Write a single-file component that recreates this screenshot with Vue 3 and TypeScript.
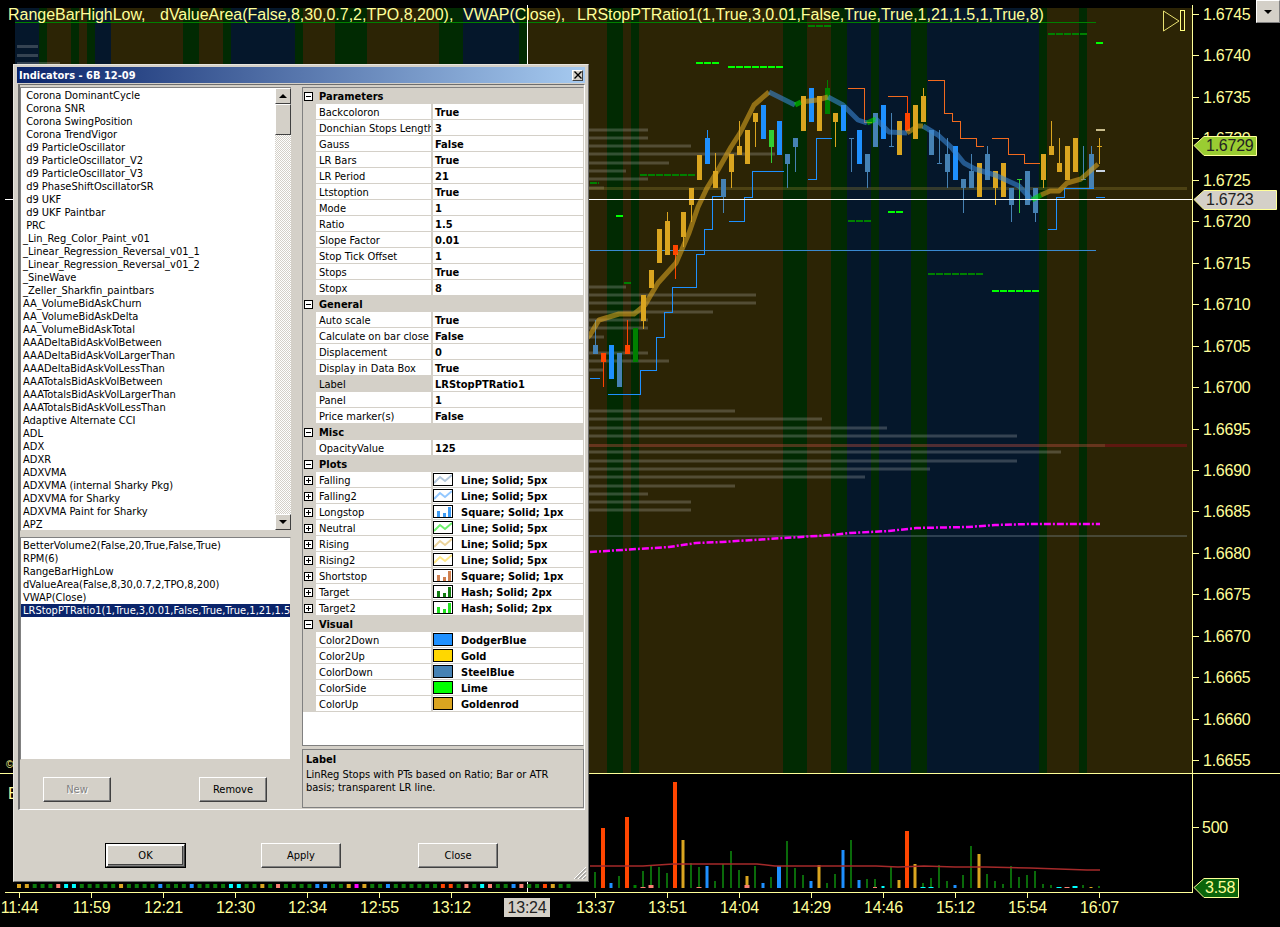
<script setup lang="ts">
type Candle = [number, string, number, number, number, number]
type Row = { name: string; value: string; plus?: boolean; icon?: string; color?: string; bars?: boolean; selected?: boolean }

const G = '#daa520', B = '#1e90ff', S = '#4682b4', R = '#ff4500', L = '#32cd32', D = '#008000'

// x, colour, wick top, wick bottom, body top, body bottom
const candles: Candle[] = [
  [595, S, 320, 354, 345, 354], [603, R, 353, 387, 353, 362], [611, B, 345, 379, 345, 379], [619, S, 353, 387, 353, 387],
  [627, R, 320, 354, 345, 354], [635, D, 328, 362, 328, 362], [643, G, 295, 329, 295, 321], [651, G, 270, 288, 270, 288],
  [659, G, 229, 263, 229, 263], [667, G, 212, 255, 221, 255], [675, R, 245, 279, 245, 255], [683, G, 212, 247, 212, 237],
  [691, G, 188, 222, 188, 205], [699, G, 155, 180, 155, 180], [707, B, 130, 164, 138, 164], [715, G, 153, 188, 171, 188],
  [723, S, 179, 213, 179, 197], [731, G, 154, 188, 154, 172], [739, G, 121, 155, 146, 155], [747, G, 130, 164, 130, 164],
  [755, G, 113, 147, 113, 122], [763, B, 105, 139, 105, 139], [771, L, 130, 163, 130, 147], [779, B, 121, 155, 121, 155],
  [787, S, 154, 188, 154, 164], [795, S, 138, 172, 138, 147], [803, G, 96, 131, 96, 131], [811, B, 88, 122, 88, 122],
  [819, G, 96, 131, 96, 131], [827, D, 80, 114, 88, 114], [835, G, 113, 147, 113, 122], [843, B, 105, 131, 105, 131],
  [851, S, 138, 172, 138, 139], [859, B, 130, 164, 130, 164], [867, S, 154, 188, 154, 172], [875, S, 113, 147, 113, 147],
  [883, B, 105, 139, 105, 139], [891, S, 113, 147, 146, 147], [899, G, 121, 155, 121, 155], [907, R, 96, 131, 113, 131],
  [915, G, 105, 139, 105, 139], [923, G, 88, 122, 96, 122], [931, S, 130, 155, 130, 155], [939, S, 130, 164, 163, 164],
  [947, S, 138, 188, 154, 172], [955, B, 146, 180, 146, 180], [963, S, 179, 213, 179, 188], [971, S, 154, 188, 171, 188],
  [979, G, 163, 197, 163, 197], [987, S, 146, 180, 154, 180], [995, G, 171, 205, 171, 188], [1003, G, 163, 197, 163, 197],
  [1011, S, 188, 222, 188, 205], [1019, L, 179, 213, 179, 180], [1027, S, 171, 205, 171, 205], [1035, S, 188, 222, 188, 213],
  [1043, G, 154, 188, 154, 180], [1051, G, 121, 155, 146, 155], [1059, G, 138, 172, 163, 172], [1067, G, 146, 180, 146, 180],
  [1075, G, 138, 172, 138, 172], [1083, S, 146, 180, 179, 180], [1091, S, 146, 188, 154, 188], [1099, G, 138, 164, 146, 147],
]

// background bands: start, end, kind
const bands: [number, number, string][] = [
  [15, 39, 'b'], [39, 47, 'g'], [47, 71, 'o'], [71, 79, 'g'], [79, 87, 'o'], [87, 95, 'g'], [95, 111, 'b'], [111, 183, 'o'],
  [183, 199, 'g'], [199, 223, 'o'], [223, 231, 'g'], [231, 295, 'b'], [295, 303, 'g'], [303, 335, 'o'], [335, 367, 'g'],
  [367, 439, 'o'], [439, 463, 'g'], [463, 519, 'b'], [519, 527, 'g'], [527, 607, 'o'], [607, 623, 'g'], [623, 631, 'o'],
  [631, 639, 'g'], [639, 783, 'o'], [783, 807, 'g'], [807, 831, 'o'], [831, 847, 'g'], [847, 871, 'b'], [871, 879, 'g'],
  [879, 911, 'b'], [911, 927, 'g'], [927, 1039, 'b'], [1039, 1047, 'g'], [1047, 1079, 'o'], [1079, 1087, 'g'], [1087, 1192, 'o'],
]
const bandFill: Record<string, string> = { o: '#2c2405', g: '#012a02', b: '#05172b' }

// value area rows: y, right end
const profile: [number, number][] = [
  [130, 648], [138, 648], [146, 691], [154, 775], [163, 669], [171, 626], [179, 648], [188, 604], [287, 626], [295, 756], [303, 756],
  [312, 713], [320, 648], [328, 648], [337, 604], [353, 648], [361, 669], [370, 604], [411, 735], [419, 822], [428, 887], [436, 1017],
  [452, 1061], [461, 1017], [469, 930], [477, 865], [486, 735], [494, 648], [502, 691], [510, 691],
]

const legend = [
  { x: 8, text: 'RangeBarHighLow,' },
  { x: 160, text: 'dValueArea(False,8,30,0.7,2,TPO,8,200),' },
  { x: 463, text: 'VWAP(Close),' },
  { x: 577, text: 'LRStopPTRatio1(1,True,3,0.01,False,True,True,1,21,1.5,1,True,8)' },
]

const priceLabels = ['1.6745', '1.6740', '1.6735', '1.6730', '1.6725', '1.6720', '1.6715', '1.6710', '1.6705', '1.6700', '1.6695', '1.6690',
  '1.6685', '1.6680', '1.6675', '1.6670', '1.6665', '1.6660', '1.6655'].map((text, i) => ({ text, y: 14 + i * 41.45 }))

const times = ['11:44', '11:59', '12:21', '12:30', '12:34', '12:55', '13:12', '13:24', '13:37', '13:51', '14:04', '14:29', '14:46', '15:12', '15:54', '16:07']
  .map((text, i) => ({ text, x: 19 + i * 72 }))

const longStops = [
  '590,378 600,378', '608,394 640,394 640,370 656,370 656,337 664,337 664,312 672,312 672,287 696,287 696,254 704,254 704,229 712,229 712,196 724,196',
  '729,221 744,221 744,197 752,197 752,171 784,171', '808,179 816,179 816,138 832,138', '1048,229 1056,229 1056,197 1064,197 1064,188 1094,188', '1096,197 1105,197',
]
const shortStops = [
  '848,88 864,88 864,122 872,122', '888,96 907,96', '928,80 944,80 944,113 952,113 952,121 960,121 960,138 976,138 976,146 984,146',
  '992,138 1008,138 1008,154 1024,154 1024,163 1040,163',
]
const limeTargets = [[696, 719, 63], [728, 783, 67], [1096, 1103, 43], [616, 623, 216], [888, 903, 212], [992, 1039, 291]]
const darkTargets = [[808, 831, 26], [1048, 1087, 34], [640, 696, 175], [848, 872, 221], [928, 983, 274], [624, 631, 283], [590, 599, 183]]

const TG = '#daa520', TB = '#3a8ad8', TL = '#00e000'
const trend: [string, string][] = [
  [TG, '585,340 590,335 599,320 619,314 634,314 645,305 652,293 658,283 676,263 689,233 698,207 707,188 718,170 731,147 740,133 754,105 769,92'],
  [TB, '769,92 779,97 795,105'], [TL, '795,105 801,102'], [TG, '801,102 817,100 828,97'],
  [TB, '828,97 843,105 858,120 867,123'], [TL, '867,123 876,119'], [TB, '876,119 889,132 907,133'],
  [TG, '907,133 918,126 923,126'], [TB, '923,126 938,135 951,147 964,163 975,169 995,175 1019,186 1032,200'],
  [TL, '1032,200 1041,195'], [TG, '1041,195 1050,191 1059,191 1067,183 1081,179 1098,164'],
]

// volume bars: x, top, colour, width
const volume: [number, number, string, number][] = [
  [603, 828, R, 4], [627, 817, R, 4], [675, 782, R, 4], [907, 831, R, 4],
  [683, 840, G, 3], [747, 876, G, 3], [819, 865, G, 3], [899, 880, G, 3], [915, 864, G, 3], [979, 854, G, 3],
  [611, 883, B, 3], [707, 866, B, 3], [763, 883, B, 3], [779, 866, B, 4], [811, 881, B, 3], [843, 850, B, 3], [859, 880, B, 3], [955, 885, B, 3],
  ...[[595, 872], [619, 876], [643, 871], [651, 865], [659, 867], [667, 873], [691, 863], [699, 867], [715, 881], [723, 864], [731, 851], [739, 870],
    [755, 866], [771, 877], [787, 841], [795, 868], [803, 875], [827, 883], [835, 874], [851, 840], [867, 879], [875, 879], [891, 866], [923, 883],
    [931, 878], [939, 865], [947, 881], [963, 875], [971, 846], [987, 874], [995, 881], [1003, 884], [1011, 866], [1019, 877], [1027, 875],
    [1035, 871], [1043, 884], [1051, 885], [1083, 885], [1099, 886]].map(([x, y]) => [x, y, '#0a6a0a', 2] as [number, number, string, number]),
  [635, 885, D, 3], [643, 887, '#fa8072', 5], [651, 885, '#fa8072', 5], [699, 887, '#fa8072', 5], [747, 885, '#fa8072', 5], [875, 887, '#fa8072', 4],
  [883, 886, '#00ffff', 3], [923, 887, '#00ffff', 5], [931, 887, '#00ffff', 5], [1059, 887, '#00ffff', 5], [1067, 887, '#fa8072', 5], [1075, 886, '#00ffff', 5], [1091, 887, G, 3],
]

// status dots along the bottom, one per bar from x=19
const dotCodes = 'ggdddsccdddddgddddbdddbddddccddgdsddddbbddgmgddbddddddrrdsdcsddbsddrgdd'
const dotColor: Record<string, string> = { g: G, d: '#0a7a0a', s: '#fa8072', c: '#00ffff', b: B, m: '#ff00ff', r: R }
const dots = dotCodes.split('').map((c, i) => ({ x: 19 + i * 7.85, fill: dotColor[c] }))

const available = [
  ' Corona DominantCycle', ' Corona SNR', ' Corona SwingPosition', ' Corona TrendVigor', ' d9 ParticleOscillator', ' d9 ParticleOscillator_V2',
  ' d9 ParticleOscillator_V3', ' d9 PhaseShiftOscillatorSR', ' d9 UKF', ' d9 UKF Paintbar', ' PRC', '_Lin_Reg_Color_Paint_v01',
  '_Linear_Regression_Reversal_v01_1', '_Linear_Regression_Reversal_v01_2', '_SineWave', '_Zeller_Sharkfin_paintbars', 'AA_VolumeBidAskChurn',
  'AA_VolumeBidAskDelta', 'AA_VolumeBidAskTotal', 'AAADeltaBidAskVolBetween', 'AAADeltaBidAskVolLargerThan', 'AAADeltaBidAskVolLessThan',
  'AAATotalsBidAskVolBetween', 'AAATotalsBidAskVolLargerThan', 'AAATotalsBidAskVolLessThan', 'Adaptive Alternate CCI', 'ADL', 'ADX', 'ADXR', 'ADXVMA',
  'ADXVMA (internal Sharky Pkg)', 'ADXVMA for Sharky', 'ADXVMA Paint for Sharky', 'APZ',
]
const applied = ['BetterVolume2(False,20,True,False,True)', 'RPM(6)', 'RangeBarHighLow', 'dValueArea(False,8,30,0.7,2,TPO,8,200)', 'VWAP(Close)',
  'LRStopPTRatio1(1,True,3,0.01,False,True,True,1,21,1.5,1,True,8)']

const sections: { title: string; rows: Row[] }[] = [
  { title: 'Parameters', rows: [
    { name: 'Backcoloron', value: 'True' }, { name: 'Donchian Stops Length', value: '3' }, { name: 'Gauss', value: 'False' }, { name: 'LR Bars', value: 'True' },
    { name: 'LR Period', value: '21' }, { name: 'Ltstoption', value: 'True' }, { name: 'Mode', value: '1' }, { name: 'Ratio', value: '1.5' },
    { name: 'Slope Factor', value: '0.01' }, { name: 'Stop Tick Offset', value: '1' }, { name: 'Stops', value: 'True' }, { name: 'Stopx', value: '8' },
  ] },
  { title: 'General', rows: [
    { name: 'Auto scale', value: 'True' }, { name: 'Calculate on bar close', value: 'False' }, { name: 'Displacement', value: '0' },
    { name: 'Display in Data Box', value: 'True' }, { name: 'Label', value: 'LRStopPTRatio1', selected: true }, { name: 'Panel', value: '1' }, { name: 'Price marker(s)', value: 'False' },
  ] },
  { title: 'Misc', rows: [{ name: 'OpacityValue', value: '125' }] },
  { title: 'Plots', rows: [
    { name: 'Falling', value: 'Line; Solid; 5px', plus: true, icon: '#b4c8dc' }, { name: 'Falling2', value: 'Line; Solid; 5px', plus: true, icon: '#93c8ff' },
    { name: 'Longstop', value: 'Square; Solid; 1px', plus: true, icon: '#3d9cf5', bars: true }, { name: 'Neutral', value: 'Line; Solid; 5px', plus: true, icon: '#6cf06c' },
    { name: 'Rising', value: 'Line; Solid; 5px', plus: true, icon: '#ecd49c' }, { name: 'Rising2', value: 'Line; Solid; 5px', plus: true, icon: '#ffe888' },
    { name: 'Shortstop', value: 'Square; Solid; 1px', plus: true, icon: '#d08050', bars: true }, { name: 'Target', value: 'Hash; Solid; 2px', plus: true, icon: '#107c10', bars: true },
    { name: 'Target2', value: 'Hash; Solid; 2px', plus: true, icon: '#20e020', bars: true },
  ] },
  { title: 'Visual', rows: [
    { name: 'Color2Down', value: 'DodgerBlue', color: '#1e90ff' }, { name: 'Color2Up', value: 'Gold', color: '#ffd700' }, { name: 'ColorDown', value: 'SteelBlue', color: '#4682b4' },
    { name: 'ColorSide', value: 'Lime', color: '#00ff00' }, { name: 'ColorUp', value: 'Goldenrod', color: '#daa520' },
  ] },
]
</script>

<template>
  <div class="screen">
    <!-- Chart canvas -->
    <svg class="chart" width="1280" height="927" viewBox="0 0 1280 927">
      <rect v-for="b in bands" :key="b[0]" :x="b[0]" y="8" :width="b[1] - b[0]" height="765" :fill="bandFill[b[2]]" />

      <!-- value area -->
      <rect v-for="p in profile" :key="p[0]" x="15" :y="p[0] - 1.5" :width="p[1] - 15" height="3" fill="#c8c8c8" fill-opacity="0.25" />
      <rect x="17" y="45" width="21" height="3" fill="#c8c8c8" fill-opacity="0.25" />
      <rect x="17" y="54" width="21" height="3" fill="#c8c8c8" fill-opacity="0.25" />
      <rect x="17" y="62" width="43" height="3" fill="#c8c8c8" fill-opacity="0.25" />
      <rect x="15" y="187" width="1172" height="3" fill="#8c7a30" fill-opacity="0.35" />
      <rect x="15" y="444" width="1090" height="3" fill="#c05040" fill-opacity="0.4" />
      <rect x="1105" y="444" width="82" height="3" fill="#5e1810" />
      <rect x="15" y="535" width="1172" height="2" fill="#8a9aa8" fill-opacity="0.3" />

      <line x1="15" y1="22.5" x2="1096" y2="22.5" stroke="#008000" />
      <line x1="590" y1="250.5" x2="1096" y2="250.5" stroke="#3a8ad0" />

      <!-- targets -->
      <line v-for="t in limeTargets" :key="t[0]" :x1="t[0]" :x2="t[1]" :y1="t[2]" :y2="t[2]" stroke="#00ff00" stroke-width="2" stroke-dasharray="7 1" />
      <line v-for="t in darkTargets" :key="t[0]" :x1="t[0]" :x2="t[1]" :y1="t[2]" :y2="t[2]" stroke="#008000" stroke-width="2" stroke-dasharray="7 1" />

      <!-- stops -->
      <polyline v-for="s in longStops" :key="s" :points="s" fill="none" stroke="#1e90ff" shape-rendering="crispEdges" />
      <polyline v-for="s in shortStops" :key="s" :points="s" fill="none" stroke="#f26a1e" shape-rendering="crispEdges" />

      <!-- candles -->
      <g v-for="c in candles" :key="c[0]">
        <line :x1="c[0] + 0.5" :x2="c[0] + 0.5" :y1="c[2]" :y2="c[3]" :stroke="c[1]" />
        <rect :x="c[0] - 2" :y="c[4]" width="5" :height="c[5] - c[4]" :fill="c[1]" />
      </g>

      <!-- trend line -->
      <polyline v-for="t in trend" :key="t[1]" :points="t[1]" fill="none" :stroke="t[0]" stroke-width="5" stroke-opacity="0.58" stroke-linejoin="round" />

      <polyline
        points="590,552 669,547 696,543 722,542 784,538 832,535 850,533 889,531 916,528 968,527 995,525 1030,524 1100,524"
        fill="none" stroke="#ff00ff" stroke-width="2.5" stroke-dasharray="7 2 2 2"
      />
      <rect x="1096" y="129" width="9" height="2" fill="#c8bc8c" />
      <rect x="1096" y="170" width="9" height="2" fill="#c8d4e4" />

      <!-- crosshair and panel edges -->
      <line x1="5" x2="1192" y1="199.5" y2="199.5" stroke="#fff" />
      <line x1="527.5" x2="527.5" y1="5" y2="892" stroke="#fff" />
      <line x1="0" x2="1280" y1="773.5" y2="773.5" stroke="#ffff99" />
      <line x1="5" x2="1192" y1="892.5" y2="892.5" stroke="#ffff99" />
      <line x1="1192.5" x2="1192.5" y1="5" y2="893" stroke="#ffff99" />

      <!-- volume panel -->
      <rect v-for="v in volume" :key="`${v[0]}-${v[1]}-${v[2]}`" :x="v[0] - v[3] / 2" :y="v[1]" :width="v[3]" :height="888 - v[1]" :fill="v[2]" />
      <polyline
        points="590,866 643,866 673,864 757,864 775,866 876,866 898,867 924,866 955,867 986,867 1030,868 1087,870 1100,870"
        fill="none" stroke="#a52a2a" stroke-width="1.5"
      />
      <rect v-for="d in dots" :key="d.x" :x="d.x - 2" y="884" width="4" height="4" :fill="d.fill" />

      <!-- end of data marker -->
      <path d="M1163.5 11 L1179 21 L1163.5 31 Z" fill="none" stroke="#e8e070" />
      <rect x="1180.5" y="10.5" width="4" height="20" fill="none" stroke="#ffff80" />

      <text v-for="l in legend" :key="l.x" class="legend" :x="l.x" y="20">{{ l.text }}</text>
      <text class="mini" x="6" y="768">©</text>
      <text class="axis" x="8" y="799">E</text>

      <!-- price axis -->
      <g v-for="p in priceLabels" :key="p.text">
        <line x1="1192" x2="1199" :y1="Math.round(p.y) + 0.5" :y2="Math.round(p.y) + 0.5" stroke="#ffff99" />
        <text class="axis" x="1203" :y="p.y + 6">{{ p.text }}</text>
      </g>
      <line x1="1192" x2="1199" y1="827.5" y2="827.5" stroke="#ffff99" />
      <text class="axis" x="1202" y="833">500</text>

      <path d="M1194 145.5 L1204 136.5 H1256.5 V155.5 H1204 Z" fill="#9acd32" stroke="#ffff99" />
      <text class="axis tag-dark" x="1206" y="151">1.6729</text>
      <path d="M1194 199.5 L1204 190.5 H1276.5 V209.5 H1204 Z" fill="#d4d0c8" stroke="#ffff99" />
      <text class="axis tag-dark" x="1206" y="205">1.6723</text>
      <path d="M1194 887.5 L1204 878.5 H1238.5 V897.5 H1204 Z" fill="#0a640a" stroke="#ffff99" />
      <text class="axis" x="1205" y="893">3.58</text>

      <!-- time axis -->
      <rect x="504" y="898" width="46" height="19" fill="#d4d0c8" />
      <g v-for="t in times" :key="t.text">
        <line v-if="t.text !== '13:24'" :x1="t.x + 0.5" :x2="t.x + 0.5" y1="892" y2="898" stroke="#ffff99" />
        <text class="axis" :class="{ 'tag-dark': t.text === '13:24' }" :x="t.text === '13:24' ? 527 : t.x + 0.5" y="913" text-anchor="middle">{{ t.text }}</text>
      </g>
    </svg>

    <!-- Combo button in the corner -->
    <div class="corner-button"><span class="arrow-down" /></div>

    <!-- Indicators dialog -->
    <div class="dialog">
      <div class="titlebar">
        <span>Indicators - 6B 12-09</span>
        <span class="title-close">
          <svg width="8" height="8" viewBox="0 0 8 8"><path d="M0.5 0.5 L7.5 7.5 M7.5 0.5 L0.5 7.5" stroke="#000" stroke-width="1.4" /></svg>
        </span>
      </div>

      <div class="client">
        <div class="left-col">
          <div class="listbox main-list">
            <div class="list-items">
              <div v-for="item in available" :key="item" class="list-item">{{ item }}</div>
            </div>
            <div class="scrollbar">
              <div class="scroll-btn"><span class="arrow-up" /></div>
              <div class="scroll-thumb" />
              <div class="scroll-track" />
              <div class="scroll-btn"><span class="arrow-down" /></div>
            </div>
          </div>
          <div class="listbox applied-list">
            <div class="list-items">
              <div v-for="(item, i) in applied" :key="item" class="list-item" :class="{ selected: i === applied.length - 1 }">{{ item }}</div>
            </div>
          </div>
          <div class="list-buttons">
            <button class="win-btn small disabled" type="button">New</button>
            <button class="win-btn small" type="button">Remove</button>
          </div>
        </div>

        <div class="right-col">
          <div class="grid">
            <template v-for="section in sections" :key="section.title">
              <div class="grid-section">
                <span class="expander"><span class="minus" /></span>
                <span>{{ section.title }}</span>
              </div>
              <div v-for="row in section.rows" :key="row.name" class="grid-row">
                <div class="gutter">
                  <span v-if="row.plus" class="expander"><span class="minus" /><span class="vert" /></span>
                </div>
                <div class="name" :class="{ active: row.selected }">{{ row.name }}</div>
                <div class="value">
                  <span v-if="row.color" class="swatch" :style="{ background: row.color }" />
                  <svg v-if="row.icon" class="swatch" width="20" height="13" viewBox="0 0 18 11">
                    <template v-if="row.bars">
                      <rect x="3" y="5" width="3" height="6" :fill="row.icon" />
                      <rect x="9" y="7" width="3" height="4" :fill="row.icon" />
                      <rect x="14" y="1" width="3" height="10" :fill="row.icon" />
                    </template>
                    <polyline v-else points="0,9 6,3 11,7 18,1" fill="none" :stroke="row.icon" stroke-width="2" />
                  </svg>
                  <span>{{ row.value }}</span>
                </div>
              </div>
            </template>
          </div>
          <div class="help">
            <b>Label</b>
            <p>LinReg Stops with PTs based on Ratio; Bar or ATR basis; transparent LR line.</p>
          </div>
        </div>
      </div>

      <div class="footer">
        <button class="win-btn default" type="button">OK</button>
        <button class="win-btn" type="button">Apply</button>
        <button class="win-btn close-btn" type="button">Close</button>
      </div>

      <svg class="grip" width="14" height="14" viewBox="0 0 14 14">
        <path d="M13 1 L1 13 M13 5 L5 13 M13 9 L9 13" stroke="#fff" stroke-width="1" />
        <path d="M13 2.5 L2.5 13 M13 6.5 L6.5 13 M13 10.5 L10.5 13" stroke="#808080" stroke-width="1" />
      </svg>
    </div>
  </div>
</template>

<style scoped>
.screen {
  position: relative;
  width: 1280px;
  height: 927px;
  overflow: hidden;
  background: #000;
  font-family: "DejaVu Sans Condensed", "DejaVu Sans", sans-serif;
  font-stretch: condensed;
  font-size: 11px;
  color: #000;
}

.chart {
  display: block;
}

.legend,
.axis,
.mini {
  font-family: "Liberation Sans", sans-serif;
  fill: #ffff99;
}

.legend {
  font-size: 16px;
  letter-spacing: -0.02px;
}

.axis {
  font-size: 16px;
  letter-spacing: -0.25px;
}

.mini {
  font-size: 10px;
}

.tag-dark {
  fill: #222;
}

.corner-button {
  position: absolute;
  top: 0;
  right: 0;
  width: 24px;
  height: 23px;
  display: flex;
  align-items: center;
  justify-content: center;
  background: #d4d0c8;
  border: 1px solid;
  border-color: #fff #808080 #808080 #fff;
  box-sizing: border-box;
}

.arrow-down,
.arrow-up {
  width: 0;
  height: 0;
  border-left: 4px solid transparent;
  border-right: 4px solid transparent;
}

.arrow-down {
  border-top: 4px solid #000;
}

.arrow-up {
  border-bottom: 4px solid #000;
}

/* Dialog */
.dialog {
  position: absolute;
  left: 13px;
  top: 64px;
  width: 576px;
  height: 818px;
  box-sizing: border-box;
  padding: 2px 3px;
  background: #d4d0c8;
  border: 1px solid;
  border-color: #e8e6e0 #6e6e6e #6e6e6e #e8e6e0;
}

.titlebar {
  height: 16px;
  display: flex;
  align-items: center;
  justify-content: space-between;
  padding: 0 2px;
  background: linear-gradient(90deg, #0a246a, #a6caf0);
  color: #fff;
  font-weight: bold;
}

.title-close {
  width: 11px;
  height: 11px;
  display: flex;
  align-items: center;
  justify-content: center;
  background: #d4d0c8;
  border: 1px solid;
  border-color: #fff #404040 #404040 #fff;
  box-sizing: border-box;
}

.client {
  margin: 1px 0 0 1px;
  height: 726px;
  box-sizing: border-box;
  display: flex;
  gap: 11px;
  border: 1px solid;
  border-width: 1px 1px 1px 2px;
  border-color: #6e6e6e #fff #fff #6e6e6e;
  padding-top: 2px;
}

.left-col {
  width: 271px;
  display: flex;
  flex-direction: column;
}

.right-col {
  width: 282px;
  display: flex;
  flex-direction: column;
  gap: 3px;
}

.listbox {
  box-sizing: border-box;
  display: flex;
  background: #fff;
  border: 1px solid;
  border-color: #808080 #d4d0c8 #d4d0c8 #808080;
  overflow: hidden;
}

.main-list {
  height: 444px;
  border-right: 0;
}

.applied-list {
  height: 223px;
  margin-top: 6px;
}

.list-items {
  flex: 1;
  min-width: 0;
  padding-top: 1px;
}

.list-item {
  height: 13px;
  line-height: 13px;
  padding-left: 2px;
  white-space: pre;
  overflow: hidden;
}

.list-item.selected {
  background: #0a246a;
  color: #fff;
}

.scrollbar {
  width: 16px;
  display: flex;
  flex-direction: column;
  flex-shrink: 0;
}

.scroll-btn,
.scroll-thumb {
  box-sizing: border-box;
  background: #d4d0c8;
  border: 1px solid;
  border-color: #fff #404040 #404040 #fff;
}

.scroll-btn {
  height: 16px;
  display: flex;
  align-items: center;
  justify-content: center;
}

.scroll-thumb {
  height: 31px;
}

.scroll-track {
  flex: 1;
  background: repeating-conic-gradient(#fff 0 25%, #d4d0c8 0 50%) 0 0 / 2px 2px;
}

.list-buttons {
  display: flex;
  gap: 88px;
  padding: 17px 0 0 23px;
}

.win-btn {
  width: 80px;
  height: 25px;
  padding: 0;
  background: #d4d0c8;
  border: 1px solid;
  border-color: #fff #404040 #404040 #fff;
  box-shadow: inset -1px -1px 0 #808080;
  font: inherit;
  color: #000;
}

.win-btn.small {
  width: 68px;
}

.win-btn.disabled {
  color: #808080;
  text-shadow: 1px 1px 0 #fff;
}

.win-btn.default {
  width: 81px;
  outline: 1px solid #000;
  outline-offset: -1px;
  border-color: #fff #404040 #404040 #fff;
  box-shadow: inset 1px 1px 0 #fff, inset -1px -1px 0 #808080, inset -2px -2px 0 #404040;
  border-width: 2px;
}

.win-btn.close-btn {
  margin-left: 2px;
}

/* Property grid */
.grid {
  height: 659px;
  box-sizing: border-box;
  background: #fff;
  border: 1px solid;
  border-color: #808080 #d4d0c8 #808080 #808080;
  overflow: hidden;
}

.grid-section {
  height: 16px;
  display: flex;
  align-items: center;
  gap: 6px;
  padding-left: 1px;
  background: #d4d0c8;
  font-weight: bold;
}

.grid-row {
  height: 16px;
  box-sizing: border-box;
  display: grid;
  grid-template-columns: 13px 115px 1fr;
  border-bottom: 1px solid #d4d0c8;
}

.gutter {
  display: flex;
  align-items: center;
  padding-left: 1px;
  margin-bottom: -1px;
  background: #d4d0c8;
}

.name {
  padding-left: 3px;
  line-height: 17px;
  white-space: nowrap;
  overflow: hidden;
}

.name.active {
  background: #d4d0c8;
  margin-bottom: -1px;
}

.value {
  display: flex;
  align-items: center;
  gap: 8px;
  padding: 1px 0 0 2px;
  border-left: 2px solid #d4d0c8;
  font-weight: bold;
  white-space: nowrap;
}

.swatch {
  width: 20px;
  height: 13px;
  box-sizing: border-box;
  margin: -1px 0 0 -2px;
  background: #fff;
  border: 1px solid #000;
  flex-shrink: 0;
}

.expander {
  position: relative;
  width: 9px;
  height: 9px;
  box-sizing: border-box;
  display: block;
  flex-shrink: 0;
  background: #fff;
  border: 1px solid #000;
}

.minus {
  position: absolute;
  left: 1px;
  top: 3px;
  width: 5px;
  height: 1px;
  background: #000;
}

.vert {
  position: absolute;
  left: 3px;
  top: 1px;
  width: 1px;
  height: 5px;
  background: #000;
}

.help {
  height: 59px;
  box-sizing: border-box;
  padding: 3px 3px;
  border: 1px solid #808080;
  line-height: 13px;
}

.help b {
  display: block;
}

.help p {
  margin: 2px 0 0;
  width: 262px;
}

.footer {
  display: flex;
  padding: 33px 0 0 88px;
  gap: 75px;
}

.grip {
  position: absolute;
  right: 1px;
  bottom: 1px;
}
</style>

<style>
html,
body {
  background: #000;
}
</style>
